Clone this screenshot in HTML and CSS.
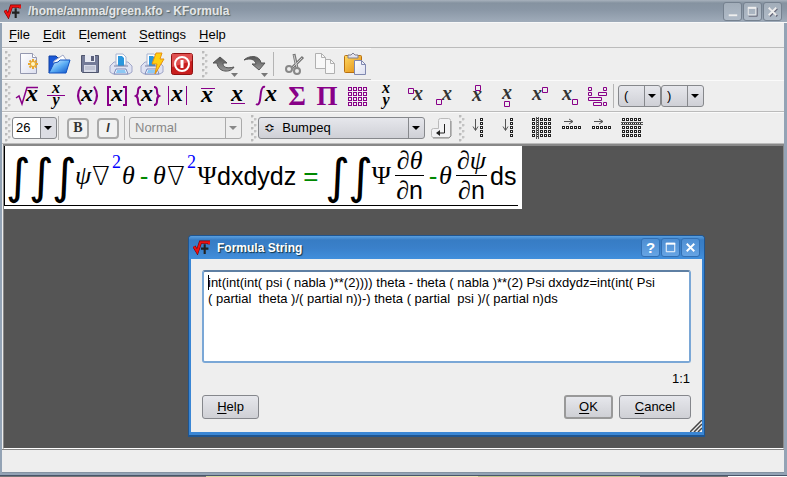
FILE: index.html
```html
<!DOCTYPE html>
<html lang="en">
<head>
<meta charset="utf-8">
<title>/home/annma/green.kfo - KFormula</title>
<link rel="stylesheet" href="styles.css">
</head>
<body>
<svg class="defs" aria-hidden="true">
  <defs>
    <pattern id="cells" width="5" height="5" x="6" y="6" patternUnits="userSpaceOnUse"><rect x=".5" y=".5" width="3" height="3" fill="none" stroke="#808"/></pattern>
    <pattern id="dots" width="4" height="4" x="6" y="5" patternUnits="userSpaceOnUse"><rect x=".5" y=".5" width="2" height="2" fill="#fff" stroke="#222"/></pattern>
    <linearGradient id="paper" x2="1" y2="1"><stop offset="0" stop-color="#fff"/><stop offset="1" stop-color="#dcdff0"/></linearGradient>
    <linearGradient id="blue" x2="1" y2="1"><stop offset="0" stop-color="#e8f6ff"/><stop offset=".5" stop-color="#5fb0f5"/><stop offset="1" stop-color="#0a50c8"/></linearGradient>
    <linearGradient id="steel" x2="0" y2="1"><stop offset="0" stop-color="#555"/><stop offset="1" stop-color="#999"/></linearGradient>
    <linearGradient id="gold" x2="1" y2="1"><stop offset="0" stop-color="#ffd860"/><stop offset="1" stop-color="#e08a10"/></linearGradient>
    <symbol id="logo" viewBox="0 0 16 14"><path d="M1 6l3 5 3-9h8v2" fill="none" stroke="#700" stroke-width="3"/><path d="M1 6l3 5 3-9h8v2" fill="none" stroke="#e11" stroke-width="2"/><path d="M11 4v9M7.500 8h7" stroke="#222" stroke-width="2"/></symbol>
    <symbol id="printer" viewBox="0 0 30 30"><path d="M4 17l4-4h14l4 4v6l-3 2H7l-3-2z" fill="#dfe2f2" stroke="#a0a6c8"/><path d="M10 5h7l3 3v8H10z" fill="#fff" stroke="#a8b4d0"/><path d="M12 7h4l2 2v8h-6z" fill="#2a96dc"/><path d="M8 17h14" stroke="#777da0"/><path d="M10 20h10l2 5H8z" fill="#f4f6ff" stroke="#7a88b8"/><path d="M11 21h8l1 3H10z" fill="#8cc8f4"/></symbol>
  </defs>
</svg>
<main class="window">
  <header class="titlebar">
    <svg class="logo"><use href="#logo"/></svg>
    <h1>/home/annma/green.kfo - KFormula</h1>
    <button class="winbtn" aria-label="Minimize"><svg viewBox="0 0 18 18"><path d="M5 13h9" stroke="#eee" stroke-width="2"/></svg></button>
    <button class="winbtn" aria-label="Maximize"><svg viewBox="0 0 18 18"><path d="M5 14h9V5" fill="none" stroke="#667"/><path d="M4.500 5.500h8v7h-8z" fill="none" stroke="#eee"/><path d="M4 5h9" stroke="#eee" stroke-width="2"/></svg></button>
    <button class="winbtn" aria-label="Close"><svg viewBox="0 0 18 18"><path d="M6 6l8 8m0-8l-8 8" stroke="#667" stroke-width="2"/><path d="M5 5l8 8m0-8l-8 8" stroke="#eee" stroke-width="2"/></svg></button>
  </header>
  <div class="content">
    <nav class="menubar">
      <a href="#"><u>F</u>ile</a><a href="#"><u>E</u>dit</a><a href="#">E<u>l</u>ement</a><a href="#"><u>S</u>ettings</a><a href="#"><u>H</u>elp</a>
    </nav>

    <div class="toolbar standard">
      <span class="handle"></span>
      <button class="tool" aria-label="New"><svg viewBox="0 0 30 30"><path d="M7.500 4.500h12l4 4v16h-16z" fill="url(#paper)" stroke="#9498b0"/><path d="M19.500 4.500v4h4" fill="#fff" stroke="#9498b0"/><path d="M20 10v10M15 15h10M16.500 11.500l7 7m0-7l-7 7" stroke="#e8a830" stroke-width="2"/><circle cx="20" cy="15" r="2" fill="#fff6c0"/></svg></button>
      <button class="tool" aria-label="Open"><svg viewBox="0 0 30 30"><path d="M5 24V7h7l2 2h5v5" fill="#1a58d8" stroke="#1040a0"/><path d="M10 12l9-6 4 6-3 6H9z" fill="#fff" stroke="#a0a8c8"/><path d="M5 24l5-10 4-1 2-2h10l-4 13z" fill="url(#blue)" stroke="#1050c0"/></svg></button>
      <button class="tool" aria-label="Save"><svg viewBox="0 0 30 30"><path d="M6.500 6.500h17v17h-16l-1-1z" fill="#747b98" stroke="#50566e"/><path d="M10 6h10v7H10z" fill="#e8eaf2"/><path d="M16 7h3v5h-3z" fill="#5a607c"/><path d="M9 16h12v7H9z" fill="#d8dbe8"/><path d="M10 18h10M10 20h10" stroke="#a8adc0"/></svg></button>
      <button class="tool" aria-label="Print"><svg><use href="#printer"/></svg></button>
      <button class="tool" aria-label="Quick print"><svg viewBox="0 0 30 30"><use href="#printer"/><path d="M19 4h6l-2 6h4L18 25l2-10h-5z" fill="#ffd010" stroke="#e89010"/></svg></button>
      <button class="tool" aria-label="Quit"><svg viewBox="0 0 30 30"><rect x="3.500" y="4.500" width="21" height="21" rx="2" fill="#c81e1e" stroke="#901010"/><path d="M4 5h20v7L4 18z" fill="#e05050"/><circle cx="14" cy="15" r="7" fill="none" stroke="#fff" stroke-width="2"/><path d="M14 11v8" stroke="#fff" stroke-width="3"/></svg></button>
      <span class="handle"></span>
      <button class="tool" aria-label="Undo"><svg viewBox="0 0 30 30"><path d="M10 8l7 6h-4c0 4 3 6 11 4-3 6-16 6-17-4H3z" fill="url(#steel)" stroke="#555"/><path d="M21 24h7l-3.500 4z" fill="#777"/></svg></button>
      <button class="tool" aria-label="Redo"><svg viewBox="0 0 30 30"><path d="M3 11c5-5 16-5 17 3h4l-6 7-7-6h4c-1-5-6-6-12-4z" fill="url(#steel)" stroke="#555"/><path d="M20 24h7l-3.500 4z" fill="#777"/></svg></button>
      <span class="sep"></span>
      <button class="tool" aria-label="Cut"><svg viewBox="0 0 30 30"><path d="M15 5l3 14M24 8L13 19" stroke="#777" stroke-width="3"/><path d="M15 6l3 13M23 9L13 19" stroke="#ccc"/><circle cx="10" cy="20" r="3" fill="none" stroke="#888" stroke-width="2"/><circle cx="18" cy="22" r="3" fill="none" stroke="#888" stroke-width="2"/></svg></button>
      <button class="tool" aria-label="Copy"><svg viewBox="0 0 30 30"><path d="M5.500 4.500h6l4 4v11h-10zM15.500 10.500h5l4 4v10h-9z" fill="#f8f8f8" stroke="#b0b0b0"/><path d="M11.500 4.500v4h4M20.500 10.500v4h4" fill="none" stroke="#b0b0b0"/></svg></button>
      <button class="tool" aria-label="Paste"><svg viewBox="0 0 30 30"><rect x="3.500" y="6.500" width="17" height="17" rx="1" fill="url(#gold)" stroke="#b87010"/><path d="M7 9V6h3l2-2 2 2h3v3z" fill="#e4e4f0" stroke="#808090"/><path d="M13.500 11.500h7l4 4v10h-11z" fill="url(#paper)" stroke="#8088b0"/><path d="M20.500 11.500v4h4" fill="none" stroke="#8088b0"/></svg></button>
    </div>

    <div class="toolbar">
      <span class="handle"></span>
      <button class="tool" aria-label="Root"><svg class="p" viewBox="0 0 30 30"><path d="M4 17l3-2 3 8L15 6.500h11" stroke-width="1.500"/><text x="20" y="20" class="x">x</text></svg></button>
      <button class="tool" aria-label="Fraction"><svg class="p" viewBox="0 0 30 30"><path d="M5 14.500h18"/><text x="14" y="12" class="s">x</text><text x="14" y="24" class="s">y</text></svg></button>
      <button class="tool" aria-label="Round brackets"><svg class="p" viewBox="0 0 30 30"><path d="M9 5.500q-6 9 0 18M22 5.500q6 9 0 18" stroke-width="2"/><text x="15" y="20" class="x">x</text></svg></button>
      <button class="tool" aria-label="Square brackets"><svg class="p" viewBox="0 0 30 30"><path d="M9 6H6v18h3M21 6h3v18h-3" stroke-width="2"/><text x="15" y="20" class="x">x</text></svg></button>
      <button class="tool" aria-label="Curly brackets"><svg class="p" viewBox="0 0 30 30"><path d="M9 6q-3 0-3 4t-2 5q2 1 2 5t3 4M22 6q3 0 3 4t2 5q-2 1-2 5t-3 4" stroke-width="2"/><text x="15" y="20" class="x">x</text></svg></button>
      <button class="tool" aria-label="Absolute"><svg class="p" viewBox="0 0 30 30"><path d="M6.500 5v19M24.500 5v19"/><text x="15" y="20" class="x">x</text></svg></button>
      <button class="tool" aria-label="Overline"><svg class="p" viewBox="0 0 30 30"><path d="M9 7.500h14"/><text x="15" y="21" class="x">x</text></svg></button>
      <button class="tool" aria-label="Underline"><svg class="p" viewBox="0 0 30 30"><path d="M9 22.500h14"/><text x="15" y="20" class="x">x</text></svg></button>
      <button class="tool" aria-label="Integral"><svg class="p" viewBox="0 0 30 30"><path d="M13 6q-3-1-4 5L8 19q-1 6-4 4" stroke-width="2"/><text x="19" y="20" class="x">x</text></svg></button>
      <button class="tool" aria-label="Sum"><svg class="p" viewBox="0 0 30 30"><text x="15" y="24" class="op">Σ</text></svg></button>
      <button class="tool" aria-label="Product"><svg class="p" viewBox="0 0 30 30"><text x="15" y="24" class="op">Π</text></svg></button>
      <button class="tool" aria-label="Matrix"><svg viewBox="0 0 30 30"><path d="M6 6h20v20H6z" fill="url(#cells)"/></svg></button>
      <button class="tool" aria-label="One over two"><svg class="p" viewBox="0 0 30 30"><text x="14" y="12" class="s">x</text><text x="14" y="24" class="s">y</text></svg></button>
      <button class="tool" aria-label="Upper left index"><svg class="p" viewBox="0 0 30 30"><path d="M6.500 7.500h5v5h-5z"/><text x="16" y="19" class="g">x</text></svg></button>
      <button class="tool" aria-label="Lower left index"><svg class="p" viewBox="0 0 30 30"><path d="M4.500 18.500h5v5h-5z"/><text x="15" y="19" class="g">x</text></svg></button>
      <button class="tool" aria-label="Upper index"><svg class="p" viewBox="0 0 30 30"><path d="M13.500 4.500h5v5h-5z"/><text x="15" y="20" class="g">x</text></svg></button>
      <button class="tool" aria-label="Lower index"><svg class="p" viewBox="0 0 30 30"><path d="M12.500 20.500h5v5h-5z"/><text x="15" y="18" class="g">x</text></svg></button>
      <button class="tool" aria-label="Upper right index"><svg class="p" viewBox="0 0 30 30"><path d="M20.500 6.500h5v5h-5z"/><text x="15" y="19" class="g">x</text></svg></button>
      <button class="tool" aria-label="Lower right index"><svg class="p" viewBox="0 0 30 30"><path d="M20.500 18.500h5v5h-5z"/><text x="15" y="19" class="g">x</text></svg></button>
      <button class="tool" aria-label="Multiline"><svg class="p" viewBox="0 0 30 30"><path d="M6.500 6.500h3v3h-3zM21.500 6.500h3v3h-3zM6.500 11.500h3v3h-3zM16.500 11.500h8v3h-8zM6.500 16.500h13v3h-13zM11.500 21.500h8v3h-8zM21.500 21.500h3v3h-3z"/></svg></button>
      <span class="sep"></span>
      <span class="combo bracket"><select aria-label="Left bracket"><option>(</option></select></span>
      <span class="combo bracket"><select aria-label="Right bracket"><option>)</option></select></span>
    </div>

    <div class="toolbar">
      <span class="handle"></span>
      <span class="combo size"><select aria-label="Font size"><option>26</option></select></span>
      <span class="sep"></span>
      <button class="tool" aria-label="Bold"><span class="toggle">B</span></button>
      <button class="tool" aria-label="Italic"><span class="toggle"><i>I</i></span></button>
      <span class="sep"></span>
      <span class="combo family off"><select aria-label="Font family" disabled><option>Normal</option></select></span>
      <span class="handle spaced"></span>
      <span class="combo symbol"><select aria-label="Symbol"><option>≎&nbsp; Bumpeq</option></select></span>
      <button class="tool" aria-label="Insert symbol"><svg viewBox="0 0 30 30"><path d="M15.500 5.500h8q2 0 2 2v15q0 2-2 2h-15q-2 0-2-2v-5q0-2 2-2h5v-8q0-2 2-2z" fill="#f2f2f4" stroke="#bbb"/><path d="M8 25h16l2-2V8" fill="none" stroke="#888"/><path d="M19.500 11v9H12" fill="none" stroke="#222"/><path d="M15 17v6l-4-3z" fill="#222"/></svg></button>
      <span class="handle spaced-small"></span>
      <button class="tool" aria-label="Append column"><svg viewBox="0 0 30 30"><path d="M14 5h4v20h-4z" fill="url(#dots)"/><path d="M9.500 6v11M7 13.500l2.500 4 2.500-4" fill="none" stroke="#555"/></svg></button>
      <button class="tool" aria-label="Insert column"><svg viewBox="0 0 30 30"><path d="M14 5h4v20h-4z" fill="url(#dots)"/><path d="M9.500 6v11M7 13.500l2.500 4 2.500-4" fill="none" stroke="#555"/></svg></button>
      <button class="tool" aria-label="Remove column"><svg viewBox="0 0 30 30"><path d="M6 5h20v20H6z" fill="url(#dots)"/><path d="M10.500 4v22M12.500 4v22" stroke="#555"/></svg></button>
      <button class="tool" aria-label="Append row"><svg viewBox="0 0 30 30"><path d="M6 13h20v4H6z" fill="url(#dots)"/><path d="M8 8.500h9M13 6l4 2.500-4 2.500" fill="none" stroke="#555"/></svg></button>
      <button class="tool" aria-label="Insert row"><svg viewBox="0 0 30 30"><path d="M6 13h20v4H6z" fill="url(#dots)"/><path d="M8 8.500h9M13 6l4 2.500-4 2.500" fill="none" stroke="#555"/></svg></button>
      <button class="tool" aria-label="Remove row"><svg viewBox="0 0 30 30"><path d="M6 5h20v20H6z" fill="url(#dots)"/><path d="M5 9.500h22M5 11.500h22" stroke="#555"/></svg></button>
    </div>

    <section class="canvas">
      <div class="formula">
        <span class="int">∫</span><span class="int">∫</span><span class="int">∫</span>
        <span class="psi">ψ</span><span class="nabla">∇</span><sup>2</sup><span class="theta">θ</span><span class="op minus">-</span><span class="theta">θ</span><span class="nabla">∇</span><sup>2</sup><span class="cap">Ψ</span><span class="latin">dxdydz</span><span class="op equals">=</span>
        <span class="int">∫</span><span class="int">∫</span><span class="cap">Ψ</span>
        <span class="frac"><span>∂<i>θ</i></span><span>∂<b>n</b></span></span>
        <span class="op tight">-</span><span class="theta">θ</span>
        <span class="frac"><span>∂<i>ψ</i></span><span>∂<b>n</b></span></span>
        <span class="latin">ds</span>
      </div>
    </section>
    <footer class="status"></footer>
  </div>

  <section class="dialog" role="dialog" aria-labelledby="dialog-title">
    <header class="titlebar active">
      <svg class="logo"><use href="#logo"/></svg>
      <h2 id="dialog-title">Formula String</h2>
      <button class="winbtn" aria-label="What's this">?</button>
      <button class="winbtn" aria-label="Maximize"><svg viewBox="0 0 18 18"><path d="M4.500 4.500h9v9h-9z" fill="none" stroke="#fff"/><path d="M4 5h10" stroke="#fff" stroke-width="2"/></svg></button>
      <button class="winbtn" aria-label="Close"><svg viewBox="0 0 18 18"><path d="M5 5l8 8m0-8l-8 8" stroke="#fff" stroke-width="2"/></svg></button>
    </header>
    <div class="dialog-body">
      <textarea aria-label="Formula string" spellcheck="false">int(int(int( psi ( nabla )**(2)))) theta - theta ( nabla )**(2) Psi dxdydz=int(int( Psi
( partial  theta )/( partial n))-) theta ( partial  psi )/( partial n)ds</textarea>
      <p class="position">1:1</p>
      <div class="actions">
        <button class="push help"><u>H</u>elp</button>
        <button class="push ok"><u>O</u>K</button>
        <button class="push cancel"><u>C</u>ancel</button>
      </div>
    </div>
    <svg class="grip" viewBox="0 0 12 12"><path d="M0 12L12 0M4 12l8-8M8 12l4-4" stroke="#444" stroke-width="1.500"/></svg>
    <span class="caret"></span>
  </section>
</main>
<div class="behind"></div>
</body>
</html>
```
FILE: styles.css
```css
* { box-sizing: border-box; }

body {
  margin: 0;
  min-height: 100vh;
  display: flex;
  flex-direction: column;
  font: 13px/16px "Liberation Sans", Arial, sans-serif;
  color: #000;
  background: #eee;
}

button, select, textarea { font: inherit; color: inherit; margin: 0; }
button { padding: 0; border: 0; background: none; }
h1, h2, p { margin: 0; }
.defs { position: absolute; width: 0; height: 0; }

.window {
  position: relative;
  flex: 1;
  display: flex;
  flex-direction: column;
  background: #93a3b5;
  border-bottom: 1px solid #48556a;
}
.content {
  flex: 1;
  display: flex;
  flex-direction: column;
  margin: 0 3px 2px 2px;
  background: #eee;
  border-bottom: 1px solid #8492a2;
}
.behind {
  height: 1px;
  background: linear-gradient(90deg, #777 206px, #d9d8a0 206px 290px, #f0e4b8 290px 478px, #c2c48c 478px 640px, #777 640px 728px, #fff 728px);
}

/* title bars */
.titlebar {
  display: flex;
  align-items: center;
  gap: 1px;
  height: 23px;
  padding: 0 5px 0 4px;
  background: linear-gradient(#a8b2bd, #8592a0 3px, #8a97a6 10px, #a0acba);
  border-bottom: 1px solid #f8f8f8;
}
.titlebar h1, .titlebar h2 {
  flex: 1;
  padding-left: 6px;
  font-size: 12px;
  line-height: 16px;
  color: #e4e6e8;
  text-shadow: 1px 1px 1px #566;
}
.logo { width: 17px; height: 15px; }
.winbtn {
  display: grid;
  place-items: center;
  width: 19px;
  height: 19px;
  border: 1px solid #75818f;
  border-radius: 3px;
  background: linear-gradient(#a2adb9, #b0bbc8);
  color: #fff;
  font-size: 15px;
  font-weight: bold;
}
.winbtn svg { width: 17px; height: 17px; }

/* menus and toolbars */
.menubar {
  display: flex;
  gap: 13px;
  height: 25px;
  padding: 4px 7px;
  border-bottom: 1px solid #bbb;
}
.menubar a { color: #000; text-decoration: none; }
u { text-underline-offset: 2px; }

.toolbar {
  display: flex;
  align-items: center;
  height: 32px;
  border-top: 1px solid #fafafa;
  border-bottom: 1px solid #bbb;
}
.toolbar.standard { gap: 1px; align-self: flex-start; }
.tool {
  flex: none;
  display: grid;
  place-items: center;
  width: 30px;
  height: 30px;
}
.tool svg { width: 30px; height: 30px; overflow: visible; }
.handle {
  flex: none;
  width: 10px;
  height: 27px;
  background:
    radial-gradient(circle at 1px 1px, #bbb 1px, transparent 2px) 3px 0 / 6px 6px,
    radial-gradient(circle at 1px 1px, #c4c4c4 1px, transparent 2px) 6px 3px / 6px 6px;
  background-clip: content-box;
  padding: 0 1px 0 3px;
}
.spaced { margin-left: 6px; }
.spaced-small { margin-left: 1px; }
.sep { flex: none; width: 1px; height: 24px; margin: 0 4px 0 1px; background: #b4b4b4; }

.p path { fill: none; stroke: #808; }
.p text {
  font-family: "Liberation Serif", serif;
  font-style: italic;
  font-weight: bold;
  text-anchor: middle;
  fill: #000;
}
.p .x { font-size: 24px; }
.p .s { font-size: 16px; }
.p .g { font-size: 20px; fill: #333; }
.p .op { font-size: 27px; font-style: normal; fill: #808; }

.combo { position: relative; flex: none; height: 22px; }
.combo select {
  appearance: none;
  display: block;
  width: 100%;
  height: 22px;
  padding: 0 18px 0 5px;
  border: 1px solid #86888c;
  border-radius: 3px;
  background: linear-gradient(90deg, transparent calc(100% - 16px), #86888c calc(100% - 16px) calc(100% - 15px), transparent calc(100% - 15px)), linear-gradient(#e6e7ec, #cfd0d6);
}
.combo::after {
  content: "";
  position: absolute;
  right: 5px;
  top: 9px;
  border: 4px solid transparent;
  border-top-color: #000;
  border-bottom: 0;
  pointer-events: none;
}
.combo.bracket { width: 43px; }
.combo.size { width: 45px; }
.combo.size select {
  padding-left: 3px;
  background: linear-gradient(90deg, #fff calc(100% - 16px), #86888c calc(100% - 16px) calc(100% - 15px), #dcdde3 calc(100% - 15px));
}
.combo.family { width: 113px; }
.combo.symbol { width: 167px; }
.combo.off select { color: #888; opacity: 1; border-color: #aaa; background: linear-gradient(90deg, #eee calc(100% - 16px), #aaa calc(100% - 16px) calc(100% - 15px), #eee calc(100% - 15px)); }
.combo.off::after { border-top-color: #888; }
.toggle {
  display: grid;
  place-items: center;
  width: 22px;
  height: 21px;
  border: 2px solid #aaa;
  border-radius: 4px;
  background: #f2f2f2;
  font: bold 14px/16px "Liberation Serif", serif;
  color: #333;
}
.toggle i { font-family: "Liberation Sans", sans-serif; font-size: 12px; }

/* formula canvas */
.canvas {
  flex: 1;
  margin: 0 0 0 1px;
  background: #555;
  border: 1px solid #888;
  border-width: 2px 1px 1px;
  border-bottom-color: #fff;
}
.formula {
  display: inline-flex;
  align-items: center;
  height: 60px;
  padding: 0 2px 0 1px;
  border-left: 1px solid #000;
  border-bottom: 1px solid #000;
  box-shadow: 4px 0 #fff, 0 3px #fff, 4px 3px #fff;
  background: #fff;
  font: 26px/30px "Liberation Serif", serif;
}
.formula > span { flex: none; text-align: center; }
.formula .int { width: 23px; font: italic 200 48px/54px "DejaVu Sans Light", "DejaVu Sans", sans-serif; }
.formula .psi { width: 16px; font-style: italic; }
.formula .nabla { width: 20px; font: 26px/30px "DejaVu Sans Light", "DejaVu Sans", sans-serif; }
.formula .theta { width: 13px; font-style: italic; }
.formula .cap { width: 20px; }
.formula .latin { font-family: "Liberation Sans", sans-serif; font-size: 25px; }
.formula sup { width: 11px; align-self: flex-start; padding-top: 6px; text-align: center; font-size: 18px; line-height: 20px; color: #00f; }
.formula .op { color: #080; font-family: "Liberation Sans", sans-serif; }
.formula .minus { width: 18px; }
.formula .equals { width: 29px; }
.formula .tight { width: 12px; }
.formula .frac { display: flex; flex-direction: column; margin: 0 3px 0 4px; }
.frac span { padding: 0 1px; line-height: 28px; }
.frac span + span { border-top: 1px solid #000; }
.frac b { font: 25px/28px "Liberation Sans", sans-serif; }

.status { height: 23px; border-top: 1px solid #888; }

/* dialog window */
.dialog {
  position: absolute;
  left: 188px;
  top: 235px;
  width: 517px;
  border: 1px solid #1f5590;
  border-bottom-width: 2px;
  border-radius: 4px 4px 0 0;
  background: #3a86d4;
}
.titlebar.active {
  background: linear-gradient(#5a9fdf, #377cc4 4px, #3a80ca 12px, #418fdc);
  border-bottom: 0;
  border-radius: 3px 3px 0 0;
  padding-right: 4px;
}
.active h2 { color: #fff; text-shadow: 1px 1px 1px #134; }
.active .winbtn { background: linear-gradient(#4d8ed2, #66a4e4); border-color: #3270b4; }
.dialog-body {
  margin: 0 2px 3px;
  padding: 11px 11px 13px;
  background: #eee;
}
textarea {
  display: block;
  width: 100%;
  height: 93px;
  padding: 3px 4px;
  border: 2px solid #7aa7d6;
  border-top-color: #5e7fa3;
  border-radius: 3px;
  background: #fff;
  resize: none;
  white-space: pre;
  overflow: hidden;
  line-height: 16px;
}
.position { padding: 8px 1px 8px 0; text-align: right; }
.actions { display: flex; gap: 6px; }
.push {
  height: 24px;
  border: 1px solid #85878c;
  border-radius: 3px;
  background: linear-gradient(#e6e7ec, #cfd0d5);
}
.help { width: 57px; margin-right: auto; }
.ok { width: 49px; border-width: 2px; border-color: #999; }
.cancel { width: 72px; }
.grip { position: absolute; right: 2px; bottom: 3px; width: 12px; height: 12px; }
.caret { position: absolute; left: 19px; top: 39px; width: 1px; height: 15px; background: #000; }
```
